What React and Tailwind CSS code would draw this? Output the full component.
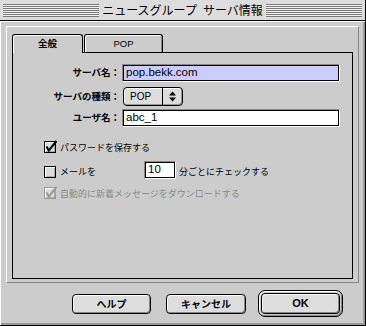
import React from 'react';

const latin = "font-['Liberation_Sans','Noto_Sans_CJK_JP',sans-serif]";

function Stripes() {
  return (
    <div className="flex-1 h-[13px] bg-[image:repeating-linear-gradient(to_bottom,#7a7a7a_0px,#7a7a7a_1px,#f2f2f2_1px,#f2f2f2_2px)]" />
  );
}

function Field({ value, selected, className }) {
  return (
    <div className={`h-[18px] border border-t-[#888] border-l-[#888] border-b-white border-r-white ${className}`}>
      <div className={`h-full border border-black flex items-center pl-[2px] text-[11.5px] leading-none ${latin} ${selected ? 'bg-[#ccccff]' : 'bg-white'}`}>
        {value}
      </div>
    </div>
  );
}

function Checkbox({ checked, disabled, className = '' }) {
  return (
    <div className={`relative w-[12px] h-[12px] shrink-0 border bg-[#dddddd] shadow-[inset_1px_1px_0_#fff,inset_-1px_-1px_0_#aaa] ${disabled ? 'border-[#999]' : 'border-black'} ${className}`}>
      {checked && (
        <svg className="absolute -left-px -top-px w-[14px] h-[12px] overflow-visible" viewBox="0 0 14 12">
          <path d="M2.5 5.5 L4.8 9.5 L12.5 0" fill="none" stroke={disabled ? '#9a9a9a' : '#000'} strokeWidth="2" />
        </svg>
      )}
    </div>
  );
}

function Button({ children, className = '' }) {
  return (
    <div className={`rounded-[4px] border border-black bg-[#dddddd] shadow-[inset_1px_1px_0_#fff,inset_-1px_-1px_0_#888] flex items-center justify-center font-bold text-[10px] ${className}`}>
      {children}
    </div>
  );
}

export default function App() {
  return (
    <div className="w-[366px] h-[326px] bg-[#cccccc] flex flex-col border-r border-b border-black overflow-hidden text-black font-['Noto_Sans_CJK_JP',sans-serif]">
      {/* title bar */}
      <div className="h-[21px] shrink-0 flex items-center px-[3px] bg-[#dddddd] border-b border-black">
        <Stripes />
        <div className="px-[3px] text-[12px] leading-none whitespace-nowrap">
          ニュースグループ<span className="inline-block w-[6px]" />サーバ情報
        </div>
        <Stripes />
      </div>

      {/* body */}
      <div className="flex-1 flex flex-col pl-[6px] pr-[6px] pt-[5px] shadow-[inset_1px_1px_0_#fff,inset_-2px_-2px_0_#999]">
        <div className="h-[257px] flex flex-col px-[5px] pt-[7px] pb-[3px] border border-t-white border-l-white border-b-[#888] border-r-[#888]">
          {/* tabs */}
          <div className="h-[18px] flex items-end">
            <div className="relative z-10 -mb-px w-[71px] h-[19px] bg-[#cccccc] border-t border-l border-r border-black rounded-t-[3px] shadow-[inset_1px_1px_0_#fff] flex items-center justify-center font-bold text-[9.5px] leading-none">
              全般
            </div>
            <div className={`ml-[1px] w-[79px] h-[18px] border-t border-l border-r border-black rounded-t-[3px] shadow-[inset_1px_1px_0_#fff,inset_-1px_0_0_#888] flex items-center justify-center text-[9.5px] leading-none ${latin}`}>
              POP
            </div>
          </div>

          {/* panel */}
          <div className="h-[227px] border border-black flex flex-col">
            <div className="mt-[11px] h-[18px] flex items-center">
              <div className="w-[107px] text-right font-bold text-[9.5px] leading-none">サーバ名：</div>
              <Field value="pop.bekk.com" selected className="ml-[2px] w-[218px]" />
            </div>

            <div className="mt-[5px] h-[19px] flex items-center">
              <div className="w-[107px] text-right font-bold text-[9.5px] leading-none">サーバの種類：</div>
              <div className="ml-[3px] w-[60px] h-[19px] rounded-[4px] border border-black bg-[#dddddd] shadow-[inset_1px_1px_0_#fff,inset_-1px_-1px_0_#999] flex">
                <div className={`flex-1 flex items-center pl-[6px] text-[10px] leading-none ${latin}`}>POP</div>
                <div className="w-[20px] border-l border-black flex items-center justify-center">
                  <svg width="7" height="11" viewBox="0 0 7 11">
                    <path d="M0 4.5 L3.5 0.5 L7 4.5Z" fill="#000" />
                    <path d="M0 6.5 L7 6.5 L3.5 10.5Z" fill="#000" />
                  </svg>
                </div>
              </div>
            </div>

            <div className="mt-[3px] h-[18px] flex items-center">
              <div className="w-[107px] text-right font-bold text-[9.5px] leading-none">ユーザ名：</div>
              <Field value="abc_1" className="ml-[2px] w-[218px]" />
            </div>

            <div className="mt-[14px] h-[12px] flex items-center pl-[31px]">
              <Checkbox checked />
              <span className="ml-[4px] text-[9px] leading-none">パスワードを保存する</span>
            </div>

            <div className="mt-[8px] h-[18px] flex items-end pl-[31px]">
              <Checkbox className="mb-[1px]" />
              <span className="ml-[4px] w-[84px] mb-[1px] text-[9px] leading-[12px]">メールを</span>
              <Field value="10" className="w-[32px]" />
              <span className="ml-[3px] mb-[1px] text-[9px] leading-[12px]">分ごとにチェックする</span>
            </div>

            <div className="mt-[8px] h-[12px] flex items-center pl-[31px]">
              <Checkbox checked disabled />
              <span className="ml-[4px] text-[9px] leading-none text-[#8a8a8a]">自動的に新着メッセージをダウンロードする</span>
            </div>
          </div>
        </div>

        {/* buttons */}
        <div className="mt-[7px] h-[27px] flex items-center justify-end pr-[16px]">
          <Button className="w-[79px] h-[20px]">ヘルプ</Button>
          <Button className="ml-[15px] w-[80px] h-[20px]">キャンセル</Button>
          <div className="ml-[12px] w-[85px] h-[27px] rounded-[7px] border border-black p-[2px] bg-[#cccccc] shadow-[inset_1px_1px_0_#fff,inset_-1px_-1px_0_#888]">
            <Button className={`w-full h-full ${latin} text-[11px]`}>OK</Button>
          </div>
        </div>
      </div>
    </div>
  );
}
